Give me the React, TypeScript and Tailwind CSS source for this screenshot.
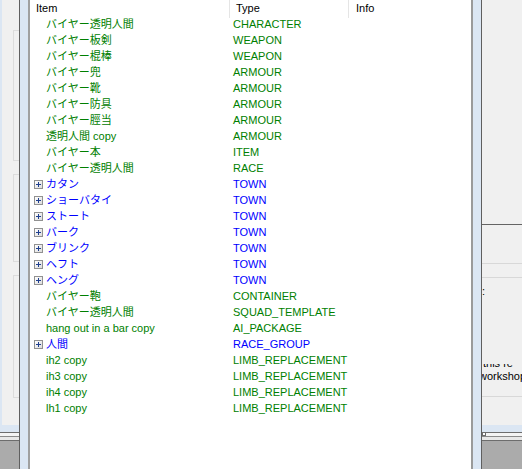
const GREEN = "text-[#008000]";
const BLUE = "text-[#0000ff]";

type Row = { item: string; type: string; group?: boolean };

const rows: Row[] = [
  { item: "バイヤー透明人間", type: "CHARACTER" },
  { item: "バイヤー板剣", type: "WEAPON" },
  { item: "バイヤー棍棒", type: "WEAPON" },
  { item: "バイヤー兜", type: "ARMOUR" },
  { item: "バイヤー靴", type: "ARMOUR" },
  { item: "バイヤー防具", type: "ARMOUR" },
  { item: "バイヤー脛当", type: "ARMOUR" },
  { item: "透明人間 copy", type: "ARMOUR" },
  { item: "バイヤー本", type: "ITEM" },
  { item: "バイヤー透明人間", type: "RACE" },
  { item: "カタン", type: "TOWN", group: true },
  { item: "ショーバタイ", type: "TOWN", group: true },
  { item: "ストート", type: "TOWN", group: true },
  { item: "バーク", type: "TOWN", group: true },
  { item: "ブリンク", type: "TOWN", group: true },
  { item: "ヘフト", type: "TOWN", group: true },
  { item: "ヘング", type: "TOWN", group: true },
  { item: "バイヤー鞄", type: "CONTAINER" },
  { item: "バイヤー透明人間", type: "SQUAD_TEMPLATE" },
  { item: "hang out in a bar copy", type: "AI_PACKAGE" },
  { item: "人間", type: "RACE_GROUP", group: true },
  { item: "ih2 copy", type: "LIMB_REPLACEMENT" },
  { item: "ih3 copy", type: "LIMB_REPLACEMENT" },
  { item: "ih4 copy", type: "LIMB_REPLACEMENT" },
  { item: "lh1 copy", type: "LIMB_REPLACEMENT" },
];

function Expander() {
  return (
    <span className="w-[9px] h-[9px] shrink-0 border border-[#919191] bg-gradient-to-br from-white to-[#dcdcdc] flex items-center justify-center">
      <svg width="7" height="7" viewBox="0 0 7 7">
        <path d="M1 3.5h5M3.5 1v5" stroke="#1f3f8f" strokeWidth="1" />
      </svg>
    </span>
  );
}

function BottomFrame({ square }: { square?: boolean }) {
  return (
    <div className="h-full flex flex-col">
      <div className="h-[7px] bg-[#dbe6f3]" />
      <div className="relative h-[1px] bg-[#6d6d6d]">
        {square && (
          <div className="absolute left-0 top-0 w-[4px] h-[4px] border border-[#6d6d6d] bg-white" />
        )}
      </div>
      <div className="h-[3px] bg-[#f4f4f4]" />
      <div className="h-[1px] bg-[#8a8a8a]" />
      <div className="h-[3px] bg-[#e8e8e8]" />
      <div className="h-[1px] bg-[#6d6d6d]" />
      <div className="flex-1 bg-[#ababab]" />
    </div>
  );
}

export default function App() {
  return (
    <main className="w-[522px] h-[469px] overflow-hidden flex bg-[#f0f0f0] font-['Liberation_Sans','Noto_Sans_CJK_JP',sans-serif] text-[11px] leading-none">
      {/* background window, left */}
      <aside className="w-[19px] shrink-0 flex flex-col">
        <div className="flex-1 flex">
          <div className="w-[2px] bg-[#dbe6f3]" />
          <div className="flex-1 flex flex-col pl-[11px] pt-[30px] gap-[13px]">
            <div className="h-[131px] border-l border-t border-b border-[#dcdcdc]" />
            <div className="h-[88px] border-l border-t border-b border-[#dcdcdc]" />
            <div className="h-[123px] border-l border-t border-b border-[#dcdcdc]" />
          </div>
        </div>
        <div className="h-[44px]">
          <BottomFrame />
        </div>
      </aside>

      {/* dialog */}
      <section className="w-[463px] shrink-0 flex border-x border-[#5f5f5f] bg-[#dbe6f3] px-[8px]">
        <div className="flex-1 bg-white border-x-2 border-l-[#a0a0a0] border-r-[#9a9a9a] flex flex-col">
          {/* header */}
          <div className="flex h-[16px] text-black">
            <div className="w-[200px] pl-[6px] pt-[3px] border-r border-[#e5e5e5] h-[18px]">Item</div>
            <div className="w-[119px] pl-[6px] pt-[3px] border-r border-[#e5e5e5] h-[18px]">Type</div>
            <div className="flex-1 pl-[7px] pt-[3px]">Info</div>
          </div>
          {/* rows */}
          <ul className="flex flex-col">
            {rows.map((r, i) => {
              const color = r.group ? BLUE : GREEN;
              return (
                <li key={i} className={`flex h-[16px] items-center ${color}`}>
                  <div className="w-[200px] flex items-center pl-[4px] gap-[3px]">
                    {r.group ? <Expander /> : <span className="w-[9px] shrink-0" />}
                    <span className="whitespace-nowrap">{r.item}</span>
                  </div>
                  <div className="pl-[3px] whitespace-nowrap">{r.type}</div>
                </li>
              );
            })}
          </ul>
        </div>
      </section>

      {/* background window, right */}
      <aside className="flex-1 flex flex-col overflow-hidden text-black">
        <div className="h-[224px]" />
        <div className="h-[1px] bg-[#646464]" />
        <div className="h-[38px]" />
        <div className="h-[1px] bg-[#d8d8d8]" />
        <div className="h-[13px]" />
        <div className="h-[1px] bg-[#d8d8d8]" />
        <div className="h-[8px]" />
        <div className="h-[12px]">:</div>
        <div className="h-[66px]" />
        <div className="h-[5px] overflow-hidden flex items-end pl-[1px]">
          <span className="whitespace-nowrap leading-[12px]">this re</span>
        </div>
        <div className="h-[13px] -ml-[3px] whitespace-nowrap pt-[2px]">workshop</div>
        <div className="h-[14px]" />
        <div className="h-[1px] bg-[#d8d8d8]" />
        <div className="h-[28px]" />
        <div className="flex-1">
          <BottomFrame square />
        </div>
      </aside>
    </main>
  );
}
